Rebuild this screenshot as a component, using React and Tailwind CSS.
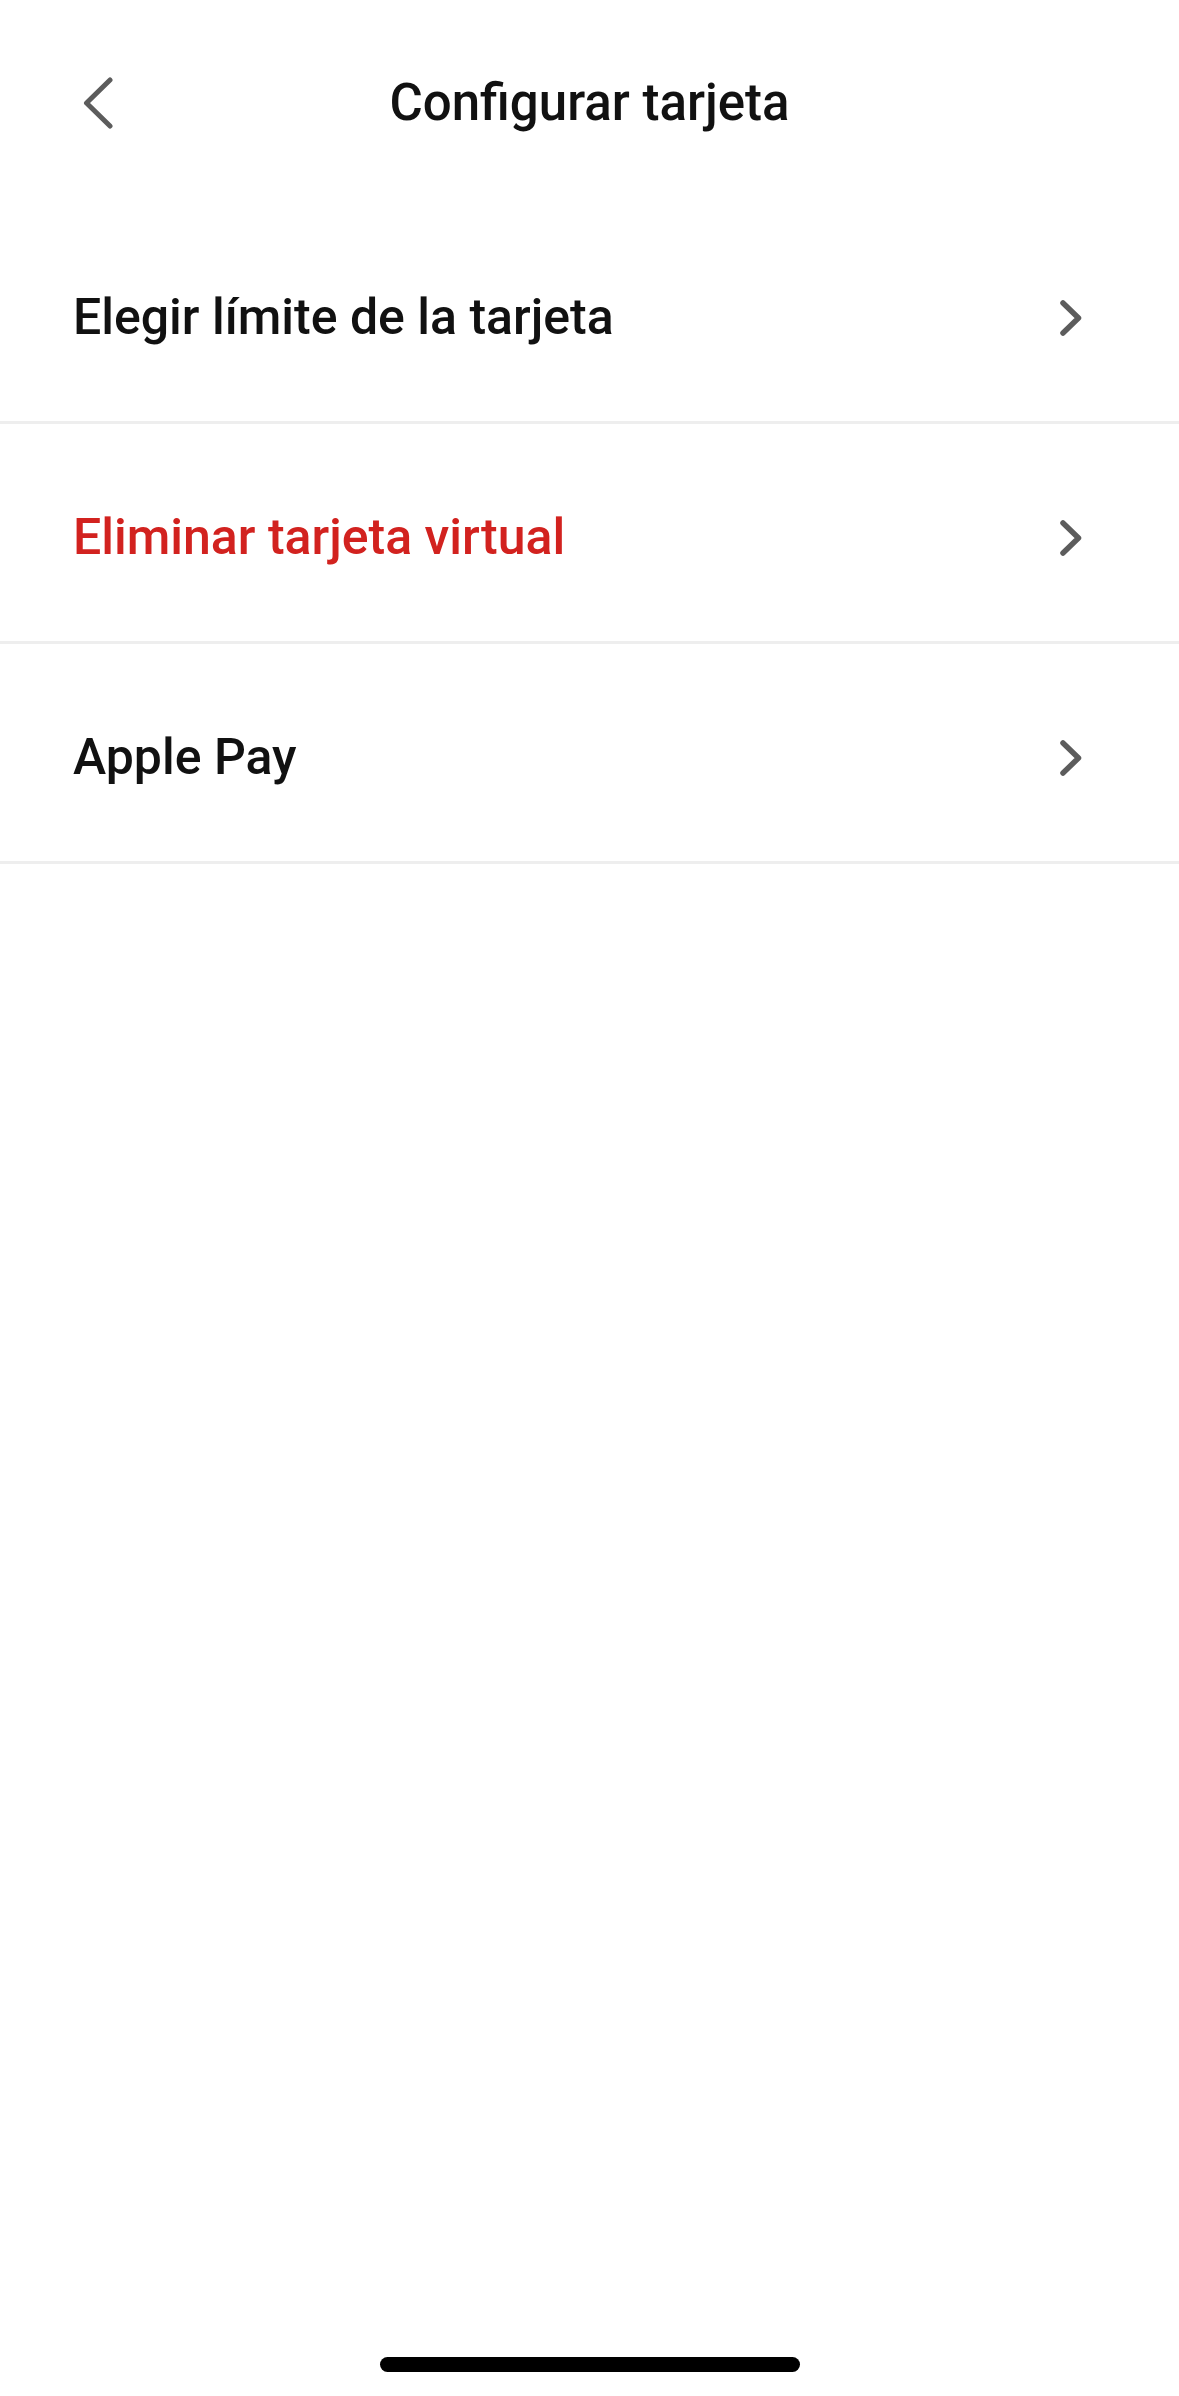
const ChevronRight = () => (
    <svg width="22" height="36" viewBox="0 0 22 36" fill="none">
        <path d="M3 3 L18.5 18 L3 33" stroke="#5c5c5c" strokeWidth="5.5" strokeLinecap="round" strokeLinejoin="round" />
    </svg>
);

const ChevronLeft = () => (
    <svg width="32" height="52" viewBox="0 0 32 52" fill="none">
        <path d="M28 3 L4.5 26 L28 49" stroke="#5c5c5c" strokeWidth="5" strokeLinecap="round" strokeLinejoin="round" />
    </svg>
);

const rows = [
    { label: 'Elegir límite de la tarjeta', danger: false },
    { label: 'Eliminar tarjeta virtual', danger: true },
    { label: 'Apple Pay', danger: false },
];

const App = () => {
    return (
        <div className="h-[2396px] w-full bg-white flex flex-col" style={{ fontFamily: 'Roboto, "Liberation Sans", sans-serif' }}>
            {/* Header */}
            <header className="h-[204px] pt-[2px] px-[82px] flex items-center justify-between">
                <button className="w-[32px] flex items-center">
                    <ChevronLeft />
                </button>
                <h1 className="text-[51px] font-medium text-[#111111]">Configurar tarjeta</h1>
                <div className="w-[32px]" />
            </header>

            {/* Options */}
            <ul>
                {rows.map((row) => (
                    <li
                        key={row.label}
                        className="h-[220px] border-b-[3px] border-[#eeeeee] pt-[10px] pl-[73px] pr-[97px] flex items-center justify-between"
                    >
                        <span className={`text-[50px] font-medium ${row.danger ? 'text-[#d2221f]' : 'text-[#111111]'}`}>
                            {row.label}
                        </span>
                        <ChevronRight />
                    </li>
                ))}
            </ul>

            {/* Home indicator */}
            <div className="mt-auto mb-[24px] flex justify-center">
                <div className="h-[15px] w-[420px] rounded-full bg-black" />
            </div>
        </div>
    );
};

export default App;
